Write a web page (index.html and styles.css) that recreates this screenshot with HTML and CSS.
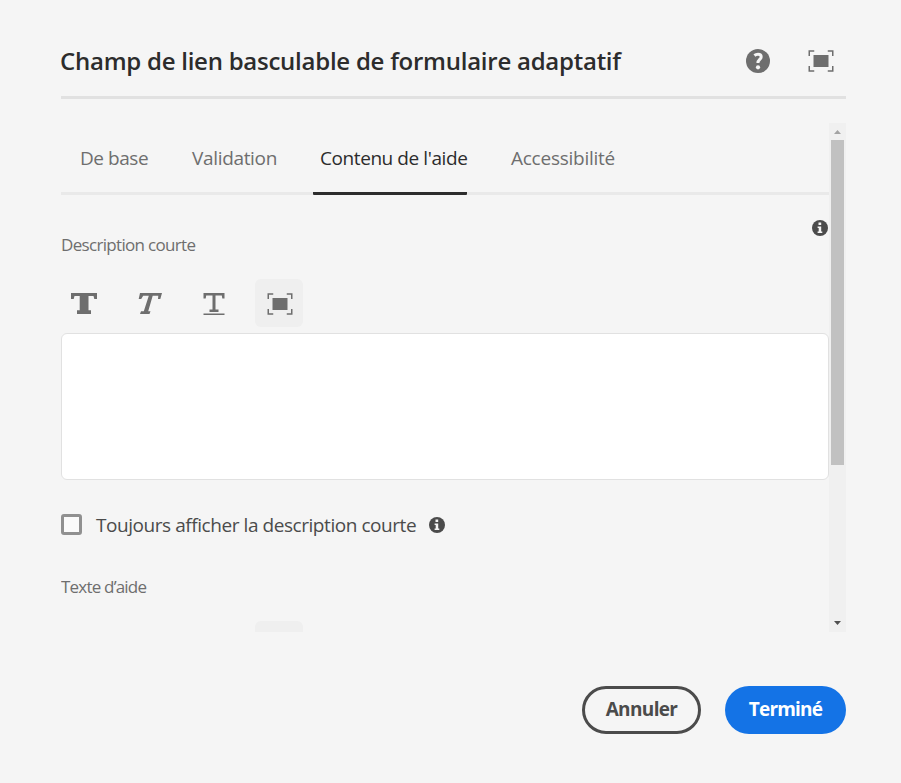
FILE: index.html
```html
<!DOCTYPE html>
<html lang="fr">
<head>
<meta charset="utf-8">
<title>Champ de lien basculable de formulaire adaptatif</title>
<link rel="stylesheet" href="styles.css">
</head>
<body>
<svg width="0" height="0" class="defs">
  <symbol id="fullscreen" viewBox="0 0 26 22">
    <path d="M5.500 5h15v12h-15z" fill="currentColor"/>
    <path d="M1.250 6V1h5M19.750 1h5v5M24.750 16v5h-5M6.250 21h-5V16" fill="none" stroke="currentColor" stroke-width="1.500"/>
  </symbol>
  <symbol id="info" viewBox="0 0 16 16">
    <circle cx="8" cy="8" r="8" fill="#4b4b4b"/>
    <path d="M6.500 2.600h2.700v2.300H6.500zM5.600 6.400h3.600v5h1.100v1.600H5.600v-1.600h1.100V8H5.600z" fill="#f5f5f5"/>
  </symbol>
</svg>
<div class="dialog">
  <header class="header">
    <h1 class="title">Champ de lien basculable de formulaire adaptatif</h1>
    <div class="actions">
      <svg class="help" viewBox="0 0 24 24"><circle cx="12" cy="12" r="12" fill="#6e6e6e"/><path d="M8.400 6.500c1-.8 2.300-1.200 3.600-1.200 2 0 3.200 1 3.200 2.600 0 2.400-3.300 2.800-3.300 6.100" fill="none" stroke="#f5f5f5" stroke-width="3"/><circle cx="12" cy="18.300" r="2.100" fill="#f5f5f5"/></svg>
      <svg class="fullscreen"><use href="#fullscreen"/></svg>
    </div>
  </header>
  <div class="scroller">
    <main class="content">
      <nav class="tabs">
        <a class="tab tab-base">De base</a>
        <a class="tab tab-validation">Validation</a>
        <a class="tab tab-help active">Contenu de l'aide</a>
        <a class="tab tab-access">Accessibilité</a>
      </nav>
      <div class="label-row">
        <label class="label">Description courte</label>
        <svg class="info"><use href="#info"/></svg>
      </div>
      <div class="toolbar">
        <span class="tool"><svg width="26" height="22" viewBox="0 0 26 22" fill="currentColor"><path d="M0 1h26v6h-2.700L22.500 4H17.500v14.300h2.500V22H6v-3.700h2.700V4H3.500l-.8 3H0z"/></svg></span>
        <span class="tool"><svg width="26" height="22" viewBox="0 0 26 22" fill="currentColor"><path d="M4 1h22l-1.700 6H22l.3-3.200h-5.600L12.200 19.300h2.300L13.500 22H4l1-2.700h2.800L12.800 3.800H7.200L5.200 7H2.700z"/></svg></span>
        <span class="tool"><svg width="22" height="24" viewBox="0 0 22 24" fill="currentColor"><path d="M.5 2h21v5.500h-2.200L18.800 4.500h-6.300V18.500h3v2.500H6.500v-2.500h3v-14H3.200l-.5 3H.5zM.5 22.500h21V24H.5z"/></svg></span>
        <span class="tool selected"><svg class="fullscreen"><use href="#fullscreen"/></svg></span>
      </div>
      <textarea class="editor"></textarea>
      <div class="check-row">
        <span class="checkbox"></span>
        <span class="check-label">Toujours afficher la description courte</span>
        <svg class="info"><use href="#info"/></svg>
      </div>
      <label class="label help-label">Texte d’aide</label>
      <div class="toolbar toolbar-next"><span class="tool selected"></span></div>
    </main>
    <div class="scrollbar">
      <svg class="arrow" viewBox="0 0 17 17"><path d="M5 11h7L8.500 7z" fill="#a3a3a3"/></svg>
      <div class="thumb"></div>
      <svg class="arrow arrow-down" viewBox="0 0 17 17"><path d="M5 6h7l-3.500 4z" fill="#505050"/></svg>
    </div>
  </div>
  <footer class="footer">
    <button class="button cancel">Annuler</button>
    <button class="button done">Terminé</button>
  </footer>
</div>
</body>
</html>
```
FILE: styles.css
```css
* { box-sizing: border-box; }
body {
  margin: 0;
  height: 783px;
  overflow: hidden;
  background: #f5f5f5;
  color: #4b4b4b;
  font-family: "Open Sans", "Noto Sans", sans-serif;
}
svg { display: block; flex: none; }
.defs { display: none; }
.dialog { margin-left: 61px; width: 785px; padding-top: 24px; }
.header {
  display: flex;
  align-items: center;
  justify-content: space-between;
  height: 75px;
  border-bottom: 3px solid #e1e1e1;
}
.title {
  margin: 2px 0 0 -1px;
  color: #2c2c2c;
  font-size: 24px;
  font-weight: 600;
  line-height: 32px;
  letter-spacing: -.25px;
  white-space: nowrap;
}
.actions { display: flex; align-items: center; gap: 38px; padding: 2px 12.500px 0 0; color: #6e6e6e; }
.help { width: 24px; height: 24px; }
.fullscreen { width: 26px; height: 22px; }
.scroller { display: flex; height: 509px; margin-top: 24px; overflow: hidden; }
.content { width: 768px; flex: none; }
.tabs { display: flex; height: 72px; padding-left: 19px; border-bottom: 3px solid #e9e9e9; }
.tab {
  height: 72px;
  color: #6e6e6e;
  font-size: 19px;
  line-height: 70px;
  white-space: nowrap;
}
.tab-base { width: 112px; letter-spacing: -.45px; }
.tab-validation { width: 121px; letter-spacing: -.33px; }
.tab-help { width: 154px; padding-left: 7px; letter-spacing: -.42px; }
.tab-access { margin-left: 44px; letter-spacing: -.25px; }
.active { color: #2c2c2c; border-bottom: 3px solid #2c2c2c; border-radius: 1px; }
.label-row { display: flex; justify-content: space-between; height: 84px; padding-top: 25px; }
.label {
  display: block;
  color: #6e6e6e;
  font-size: 17px;
  line-height: 24px;
  letter-spacing: -.68px;
  white-space: nowrap;
}
.label-row .label { margin-top: 13px; }
.info { width: 16px; height: 16px; margin-right: 1px; }
.toolbar { display: flex; gap: 17px; height: 48px; margin-left: -1px; color: #6e6e6e; }
.tool { display: flex; align-items: center; justify-content: center; width: 48px; height: 48px; border-radius: 6px; }
.tool .fullscreen { margin-top: 1px; margin-left: 1px; }
.selected { background: #efefef; }
.editor {
  display: block;
  width: 768px;
  height: 147px;
  margin-top: 6px;
  border: 1px solid #e1e1e1;
  border-radius: 6px;
  background: #fff;
  resize: none;
}
.check-row { display: flex; align-items: center; height: 29px; margin-top: 30px; }
.checkbox { width: 21px; height: 21px; border: 3px solid #909090; border-radius: 3px; background: #fafafa; }
.check-label { width: 333px; margin-left: 14px; font-size: 19px; line-height: 28px; letter-spacing: -.44px; white-space: nowrap; }
.help-label { margin-top: 36px; letter-spacing: -.8px; }
.toolbar-next { margin-top: 22px; padding-left: 195px; }
.scrollbar { width: 17px; height: 509px; background: #f0f0f0; display: flex; flex-direction: column; align-items: center; }
.arrow { width: 17px; height: 17px; }
.thumb { width: 13px; height: 325px; background: #c1c1c1; }
.arrow-down { margin-top: auto; }
.footer { display: flex; justify-content: flex-end; gap: 24px; margin-top: 54px; }
.button {
  height: 48px;
  padding: 0 0 2px;
  border-radius: 24px;
  font: 700 19px/40px "Open Sans", "Noto Sans", sans-serif;
}
.cancel { width: 119px; border: 3px solid #4b4b4b; background: transparent; color: #4b4b4b; letter-spacing: -.65px; }
.done { width: 121px; border: 0; background: #1473e6; color: #fff; letter-spacing: -.8px; }
```
